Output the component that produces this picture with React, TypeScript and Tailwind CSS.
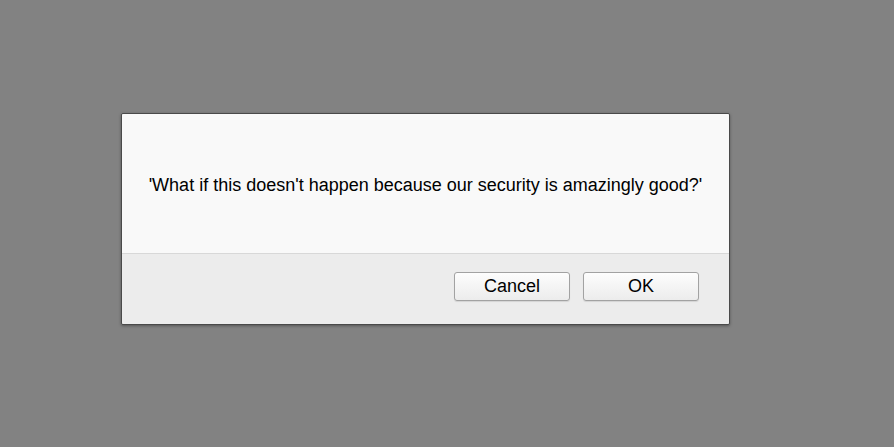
export default function App() {
  return (
    <div className="w-[894px] h-[447px] bg-[#828282] pt-[113px] pl-[121px]" style={{ fontFamily: '"Liberation Sans", Arial, sans-serif' }}>
      <div className="w-[609px] h-[212px] border border-[#4a4a4a] rounded-[2px] overflow-hidden flex flex-col shadow-[0_1px_3px_rgba(0,0,0,0.35)]">
        <div className="h-[139px] bg-[#f9f9f9] flex items-center justify-center pt-[4px] text-[18px] text-black">
          'What if this doesn't happen because our security is amazingly good?'
        </div>
        <div className="flex-1 bg-[#ececec] border-t border-[#d8d8d8] flex justify-end items-start pt-[18px] pr-[30px] gap-[13px]">
          <button className="w-[116px] h-[29px] rounded-[3px] border border-[#a2a2a2] bg-gradient-to-b from-[#fdfdfd] to-[#ececec] text-[18px] text-black shadow-[0_1px_1px_rgba(0,0,0,0.1)]">
            Cancel
          </button>
          <button className="w-[116px] h-[29px] rounded-[3px] border border-[#a2a2a2] bg-gradient-to-b from-[#fdfdfd] to-[#ececec] text-[18px] text-black shadow-[0_1px_1px_rgba(0,0,0,0.1)]">
            OK
          </button>
        </div>
      </div>
    </div>
  );
}
